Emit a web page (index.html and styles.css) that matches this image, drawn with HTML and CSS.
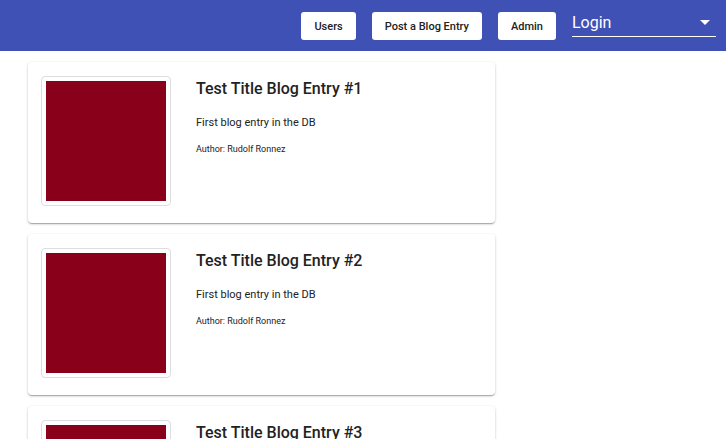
FILE: index.html
```html
<!DOCTYPE html>
<html>
<head>
<meta charset="utf-8">
<link rel="stylesheet" href="styles.css">
</head>
<body>
<header class="appbar">
  <button class="nav-btn">Users</button>
  <button class="nav-btn">Post a Blog Entry</button>
  <button class="nav-btn">Admin</button>
  <div class="select">
    <span class="select-label">Login</span>
    <svg class="select-arrow" width="10" height="5" viewBox="0 0 10 5"><path d="M0 0L5 5L10 0Z" fill="#fff"/></svg>
  </div>
</header>
<main class="list">
  <article class="card">
    <div class="thumb"><div class="thumb-fill"></div></div>
    <div class="info">
      <h2 class="title">Test Title Blog Entry #1</h2>
      <p class="desc">First blog entry in the DB</p>
      <p class="author">Author: Rudolf Ronnez</p>
    </div>
  </article>
  <article class="card">
    <div class="thumb"><div class="thumb-fill"></div></div>
    <div class="info">
      <h2 class="title">Test Title Blog Entry #2</h2>
      <p class="desc">First blog entry in the DB</p>
      <p class="author">Author: Rudolf Ronnez</p>
    </div>
  </article>
  <article class="card">
    <div class="thumb"><div class="thumb-fill"></div></div>
    <div class="info">
      <h2 class="title">Test Title Blog Entry #3</h2>
      <p class="desc">First blog entry in the DB</p>
      <p class="author">Author: Rudolf Ronnez</p>
    </div>
  </article>
</main>
</body>
</html>
```

FILE: styles.css
```css
html, body {
  margin: 0;
  padding: 0;
  background: #fff;
  font-family: Roboto, "Liberation Sans", sans-serif;
  overflow: hidden;
}
.appbar {
  height: 51px;
  background: #3f51b5;
  display: flex;
  align-items: flex-start;
  justify-content: flex-end;
  padding: 0 10px 0 0;
  box-sizing: border-box;
  gap: 16px;
}
.nav-btn {
  margin-top: 12px;
  height: 28px;
  padding: 0 13px;
  background: #fff;
  border: none;
  border-radius: 3px;
  font-family: Roboto, sans-serif;
  font-weight: 500;
  font-size: 11px;
  color: #222;
  cursor: pointer;
}
.select {
  width: 144px;
  height: 26px;
  margin-top: 11px;
  border-bottom: 1px solid #fff;
  display: flex;
  align-items: center;
  justify-content: space-between;
  box-sizing: border-box;
  padding: 0 2px 2px 0;
}
.select-label {
  color: #fff;
  font-size: 16px;
  line-height: 20px;
}
.select-arrow {
  margin-right: 4px;
}
.list {
  display: flex;
  flex-direction: column;
  gap: 11px;
  padding: 11px 0 0 28px;
}
.card {
  width: 467px;
  box-sizing: border-box;
  background: #fff;
  border-radius: 4px;
  box-shadow: 0 1px 3px rgba(0,0,0,0.2), 0 1px 1px rgba(0,0,0,0.14), 0 2px 1px -1px rgba(0,0,0,0.12);
  display: flex;
  padding: 14px 13px 17px 13px;
  gap: 25px;
  flex-shrink: 0;
}
.thumb {
  width: 130px;
  height: 130px;
  box-sizing: border-box;
  border: 1px solid #ddd;
  border-radius: 4px;
  padding: 4px;
  flex-shrink: 0;
}
.thumb-fill {
  width: 120px;
  height: 120px;
  background: #880019;
}
.info {
  padding-top: 3px;
}
.title {
  margin: 0;
  font-size: 16px;
  font-weight: 500;
  color: #222;
  line-height: 20px;
}
.desc {
  margin: 17px 0 0 0;
  font-size: 11px;
  color: #222;
  line-height: 14px;
}
.author {
  margin: 13px 0 0 0;
  font-size: 9px;
  color: #222;
  line-height: 12px;
}
```
